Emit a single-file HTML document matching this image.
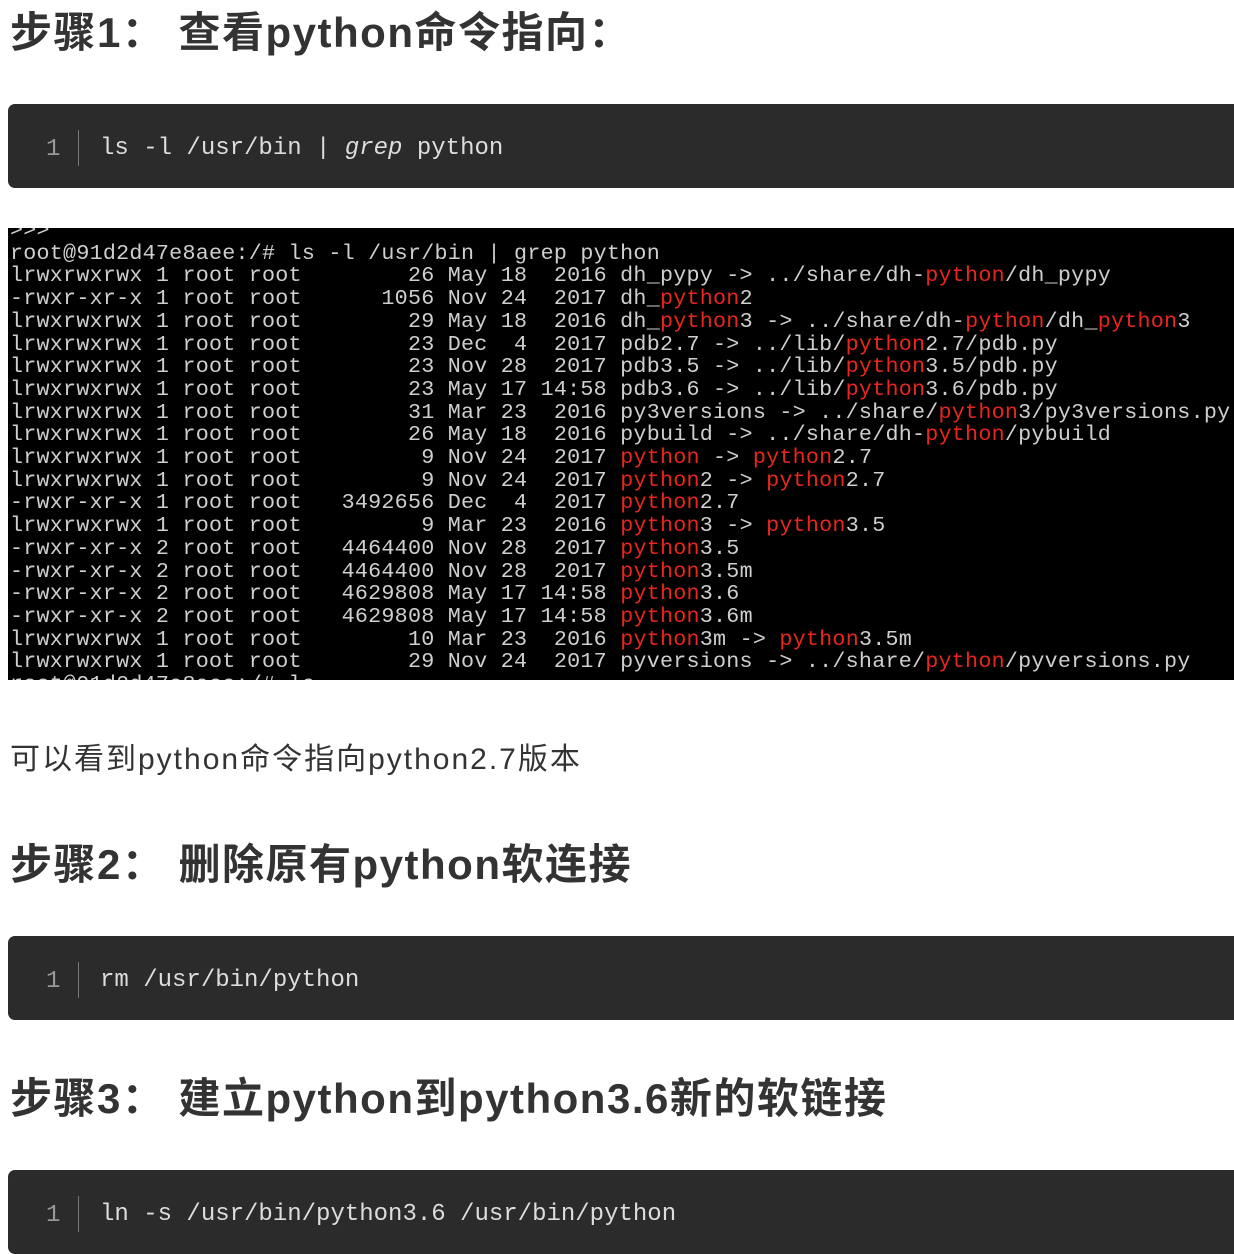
<!DOCTYPE html>
<html><head><meta charset="utf-8"><style>
body{margin:0;width:1234px;height:1226px;background:#fff;position:relative;overflow:hidden;}
.h{position:absolute;left:10px;font-family:"Liberation Sans","Noto Sans CJK SC",sans-serif;font-weight:bold;font-size:42px;color:#333;white-space:nowrap;line-height:50px;letter-spacing:1.5px;}
.p{position:absolute;left:10px;font-family:"Liberation Sans","Noto Sans CJK SC",sans-serif;font-size:30px;color:#333;white-space:nowrap;line-height:40px;letter-spacing:2px;}
.code{position:absolute;left:8px;width:1240px;height:84px;background:#2b2b2b;border-radius:7px;}
.code .n{position:absolute;left:38px;top:31px;font-family:"Liberation Mono",monospace;font-size:24px;color:#999;line-height:30px;}
.code .bar{position:absolute;left:70px;top:26px;width:1px;height:36px;background:#777;}
.code .t{position:absolute;left:92px;top:30px;font-family:"Liberation Mono",monospace;font-size:24px;color:#ddd;line-height:30px;white-space:pre;}
.term{position:absolute;left:8px;top:228px;width:1226px;height:452px;background:#000;overflow:hidden;}
.term pre{margin:0;position:absolute;left:2px;top:-8px;font-family:"Liberation Mono",monospace;font-size:21.7px;line-height:22.7px;color:#cfcfcf;letter-spacing:0.25px;}
.r{color:#e8261f;}
</style></head><body>
<div class="h" style="top:8px">步骤1： 查看python命令指向：</div>
<div class="code" style="top:104px"><span class="n">1</span><span class="bar"></span><span class="t">ls -l /usr/bin | <i>grep</i> python</span></div>
<div class="term"><pre>&gt;&gt;&gt;
root@91d2d47e8aee:/# ls -l /usr/bin | grep python
lrwxrwxrwx 1 root root        26 May 18  2016 dh_pypy -&gt; ../share/dh-<span class="r">python</span>/dh_pypy
-rwxr-xr-x 1 root root      1056 Nov 24  2017 dh_<span class="r">python</span>2
lrwxrwxrwx 1 root root        29 May 18  2016 dh_<span class="r">python</span>3 -&gt; ../share/dh-<span class="r">python</span>/dh_<span class="r">python</span>3
lrwxrwxrwx 1 root root        23 Dec  4  2017 pdb2.7 -&gt; ../lib/<span class="r">python</span>2.7/pdb.py
lrwxrwxrwx 1 root root        23 Nov 28  2017 pdb3.5 -&gt; ../lib/<span class="r">python</span>3.5/pdb.py
lrwxrwxrwx 1 root root        23 May 17 14:58 pdb3.6 -&gt; ../lib/<span class="r">python</span>3.6/pdb.py
lrwxrwxrwx 1 root root        31 Mar 23  2016 py3versions -&gt; ../share/<span class="r">python</span>3/py3versions.py
lrwxrwxrwx 1 root root        26 May 18  2016 pybuild -&gt; ../share/dh-<span class="r">python</span>/pybuild
lrwxrwxrwx 1 root root         9 Nov 24  2017 <span class="r">python</span> -&gt; <span class="r">python</span>2.7
lrwxrwxrwx 1 root root         9 Nov 24  2017 <span class="r">python</span>2 -&gt; <span class="r">python</span>2.7
-rwxr-xr-x 1 root root   3492656 Dec  4  2017 <span class="r">python</span>2.7
lrwxrwxrwx 1 root root         9 Mar 23  2016 <span class="r">python</span>3 -&gt; <span class="r">python</span>3.5
-rwxr-xr-x 2 root root   4464400 Nov 28  2017 <span class="r">python</span>3.5
-rwxr-xr-x 2 root root   4464400 Nov 28  2017 <span class="r">python</span>3.5m
-rwxr-xr-x 2 root root   4629808 May 17 14:58 <span class="r">python</span>3.6
-rwxr-xr-x 2 root root   4629808 May 17 14:58 <span class="r">python</span>3.6m
lrwxrwxrwx 1 root root        10 Mar 23  2016 <span class="r">python</span>3m -&gt; <span class="r">python</span>3.5m
lrwxrwxrwx 1 root root        29 Nov 24  2017 pyversions -&gt; ../share/<span class="r">python</span>/pyversions.py
root@91d2d47e8aee:/# ls</pre></div>
<div class="p" style="top:740px">可以看到python命令指向python2.7版本</div>
<div class="h" style="top:840px">步骤2： 删除原有python软连接</div>
<div class="code" style="top:936px"><span class="n">1</span><span class="bar"></span><span class="t">rm /usr/bin/python</span></div>
<div class="h" style="top:1074px">步骤3： 建立python到python3.6新的软链接</div>
<div class="code" style="top:1170px"><span class="n">1</span><span class="bar"></span><span class="t">ln -s /usr/bin/python3.6 /usr/bin/python</span></div>
</body></html>
